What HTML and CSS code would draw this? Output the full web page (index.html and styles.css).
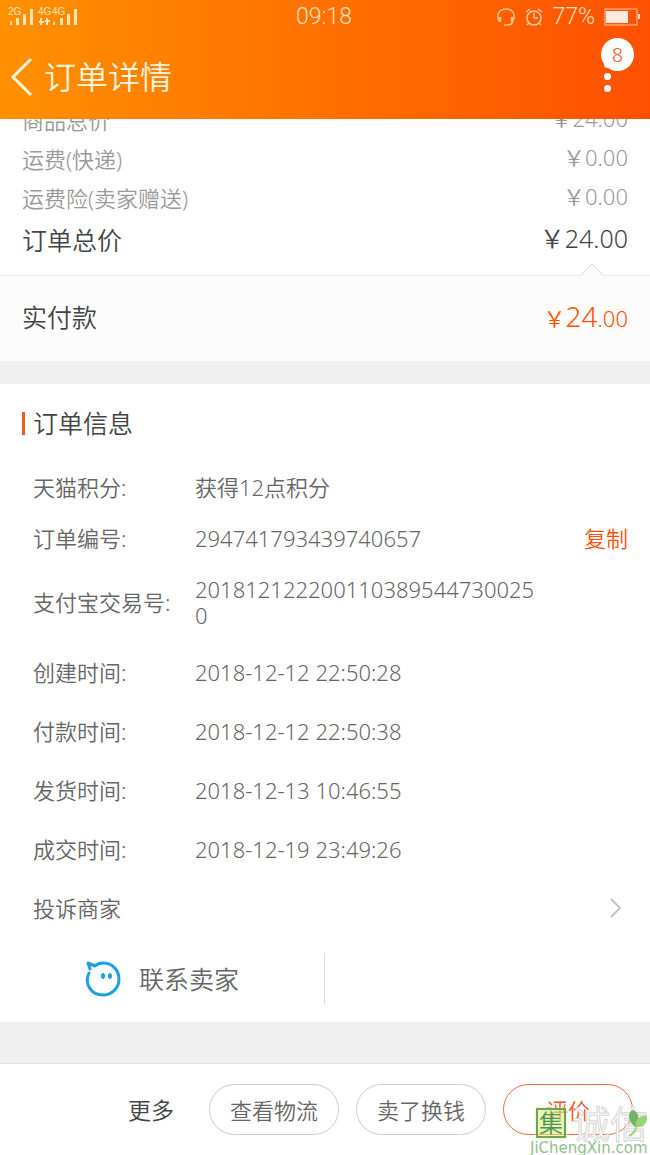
FILE: index.html
```
<!DOCTYPE html>
<html lang="zh-CN">
<head>
    <meta charset="UTF-8">
    <meta name="viewport" content="width=device-width, initial-scale=1.0">
    <title>订单详情</title>
    <link rel="stylesheet" href="styles.css">
</head>
<body>
    <header class="header">
        <div class="status_bar">
            <div class="status_left">
                <svg class="signal" width="70" height="20" viewBox="0 0 70 20" aria-hidden="true">
                    <g fill="#ffe6b8">
                        <rect x="2" y="14" width="2" height="4"/>
                        <rect x="8" y="11" width="3" height="7"/>
                        <rect x="15" y="7" width="3" height="11"/>
                        <rect x="22" y="2" width="3" height="16"/>
                        <rect x="45" y="15" width="2" height="3"/>
                        <rect x="52" y="11" width="3" height="7"/>
                        <rect x="59" y="7" width="3" height="11"/>
                        <rect x="66" y="2" width="3" height="16"/>
                        <text x="0" y="8" class="signal_text">2G</text>
                        <text x="30" y="8" class="signal_text">4G</text>
                        <text x="44" y="8" class="signal_text">4G</text>
                    </g>
                    <path d="M33 11v7M31 15h5M39 11v7M37 14h5" stroke="#ffe6b8" stroke-width="2" fill="none"/>
                </svg>
            </div>
            <span class="time">09:18</span>
            <div class="status_right">
                <svg width="20" height="20" viewBox="0 0 20 20" fill="none" stroke="#ffc48a" stroke-width="1.5" aria-hidden="true">
                    <path d="M3 14C0 8 3 2 10 2s10 6 7 12"/>
                    <path d="M4 10v5M16 10v5" stroke-width="2.5"/>
                    <path d="M17 14c-1 3-3 4-5 4H8"/>
                </svg>
                <svg width="18" height="20" viewBox="0 0 18 20" fill="none" stroke="#ffd0a0" stroke-width="1.5" aria-hidden="true">
                    <circle cx="9" cy="11" r="7"/>
                    <path d="M9 6v5h4M1 5l4-3M17 5l-4-3M4 16l-2 2M14 16l2 2"/>
                </svg>
                <span class="percent">77%</span>
                <svg width="36" height="18" viewBox="0 0 36 18" aria-hidden="true">
                    <rect x="1" y="1" width="32" height="16" fill="none" stroke="#ffc9a8"/>
                    <rect x="2" y="3" width="22" height="12" fill="#ffeadf"/>
                    <rect x="34" y="6" width="2" height="5" fill="#ffe0d0"/>
                </svg>
            </div>
        </div>
        <div class="title_bar">
            <button class="back_btn" type="button" aria-label="返回">
                <svg width="24" height="40" viewBox="0 0 24 40" fill="none" stroke="#fff5dc" stroke-width="3" aria-hidden="true">
                    <path d="M21 2L3 20l18 18"/>
                </svg>
            </button>
            <h1 class="title">订单详情</h1>
            <button class="more_btn" type="button" aria-label="更多选项">
                <span class="dot"></span>
                <span class="dot"></span>
                <span class="dot"></span>
                <span class="badge">8</span>
            </button>
        </div>
    </header>

    <main class="content">
        <!-- 价格 -->
        <dl class="price_list">
            <div class="price_row"><dt>商品总价</dt><dd>￥24.00</dd></div>
            <div class="price_row"><dt>运费(快递)</dt><dd>￥0.00</dd></div>
            <div class="price_row"><dt>运费险(卖家赠送)</dt><dd>￥0.00</dd></div>
            <div class="price_row total"><dt>订单总价</dt><dd>￥24.00</dd></div>
        </dl>
        <section class="paid">
            <svg class="paid_arrow" width="26" height="14" viewBox="0 0 26 14" aria-hidden="true">
                <path d="M0 13L13 1l13 12v1H0z" fill="#fcfcfc"/>
                <path d="M1 13L13 1l12 12" fill="none" stroke="#dcdcdc"/>
            </svg>
            <span class="paid_label">实付款</span>
            <span class="paid_price">￥<span class="paid_big">24</span>.00</span>
        </section>

        <!-- 订单信息 -->
        <section class="info">
            <h2 class="info_title">订单信息</h2>
            <dl class="info_list">
                <div class="info_row"><dt>天猫积分:</dt><dd>获得12点积分</dd></div>
                <div class="info_row">
                    <dt>订单编号:</dt>
                    <dd>294741793439740657</dd>
                    <dd class="action"><button class="copy_btn" type="button">复制</button></dd>
                </div>
                <div class="info_row"><dt>支付宝交易号:</dt><dd>2018121222001103895447300250</dd></div>
            </dl>
            <dl class="info_list time_list">
                <div class="info_row"><dt>创建时间:</dt><dd>2018-12-12 22:50:28</dd></div>
                <div class="info_row"><dt>付款时间:</dt><dd>2018-12-12 22:50:38</dd></div>
                <div class="info_row"><dt>发货时间:</dt><dd>2018-12-13 10:46:55</dd></div>
                <div class="info_row"><dt>成交时间:</dt><dd>2018-12-19 23:49:26</dd></div>
            </dl>
            <a class="complain" href="#">
                <span>投诉商家</span>
                <svg width="14" height="22" viewBox="0 0 14 22" fill="none" stroke="#c4c4c4" stroke-width="2" aria-hidden="true">
                    <path d="M2 2l9 9-9 9"/>
                </svg>
            </a>
            <div class="contact">
                <a class="contact_link" href="#">
                    <svg width="36" height="36" viewBox="0 0 36 36" fill="none" stroke="#1e9fe0" stroke-width="3" stroke-linecap="round" stroke-linejoin="round" aria-hidden="true">
                        <path d="M4 12C-1 23 6 34 18 34c9 0 16-7 16-16S27 2 18 2c-4 0-6 1-8 3L3 2l2 6"/>
                        <ellipse cx="18" cy="15" rx="2" ry="3" fill="#1e9fe0" stroke="none"/>
                        <ellipse cx="25" cy="15" rx="2" ry="3" fill="#1e9fe0" stroke="none"/>
                    </svg>
                    <span>联系卖家</span>
                </a>
            </div>
        </section>
    </main>

    <footer class="footer">
        <button class="more_text" type="button">更多</button>
        <button class="btn" type="button">查看物流</button>
        <button class="btn" type="button">卖了换钱</button>
        <button class="btn primary" type="button">评价</button>
        <div class="watermark">
            <div class="mark_top">
                <span class="mark_box">集</span>
                <span class="mark_name">诚信</span>
            </div>
            <svg class="mark_leaf" width="20" height="28" viewBox="0 0 20 28" aria-hidden="true">
                <path d="M8 18C0 14-1 5 4 1c6 1 9 8 4 17z" fill="#72b566"/>
                <path d="M8 18C7 10 11 6 19 7c1 7-4 12-11 11z" fill="#9bd477"/>
                <path d="M8 17c0 5-3 8-7 10" fill="none" stroke="#9bd477" stroke-width="2"/>
            </svg>
            <span class="mark_url">JiChengXin.com</span>
        </div>
    </footer>
</body>
</html>
```
FILE: styles.css
```
* {
    margin: 0;
    padding: 0;
    box-sizing: border-box;
}

body {
    display: flex;
    flex-direction: column;
    min-height: 100vh;
    background-color: #f0f0f0;
    color: #666;
    font-family: "Noto Sans", "Noto Sans CJK SC", sans-serif;
    font-size: 22px;
    font-weight: 350;
    line-height: 26px;
}

button {
    border: none;
    background: none;
    color: inherit;
    font: inherit;
    cursor: pointer;
}

a {
    color: inherit;
    text-decoration: none;
}

/* header */
.header {
    position: relative;
    z-index: 1;
    height: 119px;
    background: linear-gradient(to right, #ff9000, #ff5000);
    color: #fff5dc;
}

.status_bar {
    display: grid;
    grid-template-columns: 1fr auto 1fr;
    align-items: center;
    height: 34px;
    padding: 0 10px 0 8px;
    font-family: Roboto, sans-serif;
    font-size: 23px;
    font-weight: 300;
    color: #ffe0c0;
}

.status_left,
.status_right {
    display: flex;
    align-items: center;
}

.status_right {
    justify-content: flex-end;
    gap: 9px;
}

.signal_text {
    font-family: "Liberation Sans", sans-serif;
    font-size: 10px;
    font-weight: normal;
}

.title_bar {
    display: flex;
    align-items: center;
    height: 85px;
    padding: 0 22px 0 10px;
}

.back_btn {
    display: flex;
}

.title {
    flex: 1;
    padding-left: 10px;
    font-size: 32px;
    font-weight: 350;
    line-height: 40px;
}

.more_btn {
    position: relative;
    display: flex;
    flex-direction: column;
    align-items: center;
    gap: 5px;
    width: 42px;
}

.dot {
    width: 7px;
    height: 7px;
    border-radius: 50%;
    background-color: #fff;
}

.badge {
    position: absolute;
    top: -23px;
    right: -6px;
    width: 33px;
    height: 33px;
    border-radius: 50%;
    background-color: #fff;
    color: #e8501c;
    font-size: 20px;
    line-height: 33px;
    text-align: center;
}

/* price */
.content {
    flex: 1;
}

.price_list {
    margin-top: -19px;
    padding: 0 22px 13px;
    background-color: #fff;
    color: #999;
}

.price_row {
    display: flex;
    justify-content: space-between;
    align-items: center;
    height: 39px;
}

.price_row dd {
    padding-bottom: 4px;
}

.total {
    height: 45px;
    color: #444;
    font-size: 25px;
}

.paid {
    position: relative;
    display: flex;
    justify-content: space-between;
    align-items: center;
    height: 86px;
    padding: 0 22px 4px;
    border-top: 1px solid #e8e8e8;
    background-color: #fcfcfc;
}

.paid_arrow {
    position: absolute;
    top: -13px;
    right: 45px;
}

.paid_label {
    color: #444;
    font-size: 25px;
}

.paid_price {
    color: #ff5000;
}

.paid_big {
    font-size: 28px;
}

/* info */
.info {
    margin-top: 23px;
    padding-top: 23px;
    background-color: #fff;
}

.info_title {
    display: flex;
    align-items: center;
    gap: 8px;
    margin-bottom: 23px;
    padding-left: 22px;
    color: #444;
    font-size: 25px;
    font-weight: 350;
    line-height: 32px;
}

.info_title::before {
    content: "";
    width: 3px;
    height: 23px;
    background-color: #f05a1e;
}

.info_list {
    padding: 0 22px 0 33px;
}

.info_row {
    display: grid;
    grid-template-columns: 162px 1fr 84px;
    align-items: center;
    padding: 12px 0 13px;
    word-break: break-all;
}

.action {
    text-align: right;
}

.copy_btn {
    color: #ff5000;
}

.time_list {
    padding-top: 2px;
}

.time_list .info_row,
.complain {
    padding-top: 16px;
    padding-bottom: 17px;
}

.complain {
    display: flex;
    justify-content: space-between;
    align-items: center;
    padding-left: 33px;
    padding-right: 27px;
}

.contact {
    display: flex;
    padding: 15px 0 17px;
}

.contact_link {
    display: flex;
    justify-content: center;
    align-items: center;
    gap: 18px;
    width: 50%;
    height: 52px;
    border-right: 1px solid #ddd;
    font-size: 25px;
}

/* footer */
.footer {
    position: relative;
    display: flex;
    justify-content: flex-end;
    align-items: center;
    gap: 17px;
    height: 92px;
    padding: 0 17px;
    border-top: 1px solid #e2e2e2;
    background-color: #fff;
}

.more_text {
    margin-right: 18px;
    color: #444;
    font-size: 23px;
}

.btn {
    width: 130px;
    height: 51px;
    border: 1px solid #ccc;
    border-radius: 26px;
}

.primary {
    border-color: #f0683c;
    color: #f0582a;
}

.watermark {
    position: absolute;
    right: 0;
    bottom: 0;
    width: 120px;
    pointer-events: none;
}

.mark_top {
    display: flex;
    align-items: center;
    gap: 6px;
    padding-left: 6px;
}

.mark_box {
    width: 30px;
    height: 30px;
    border: 2px solid #6ea25c;
    background-color: rgba(214, 240, 130, 0.6);
    box-shadow: 0 0 3px #dcf08c;
    color: #4f9350;
    font-size: 24px;
    line-height: 25px;
    text-align: center;
}

.mark_name {
    color: #fff;
    font-size: 38px;
    line-height: 36px;
    -webkit-text-stroke: 1px #d4d4d4;
}

.mark_leaf {
    position: absolute;
    top: 4px;
    right: 2px;
}

.mark_url {
    display: block;
    color: #8fbf8a;
    font-family: "DejaVu Sans", sans-serif;
    font-size: 15px;
    font-weight: normal;
    line-height: 14px;
}
```
